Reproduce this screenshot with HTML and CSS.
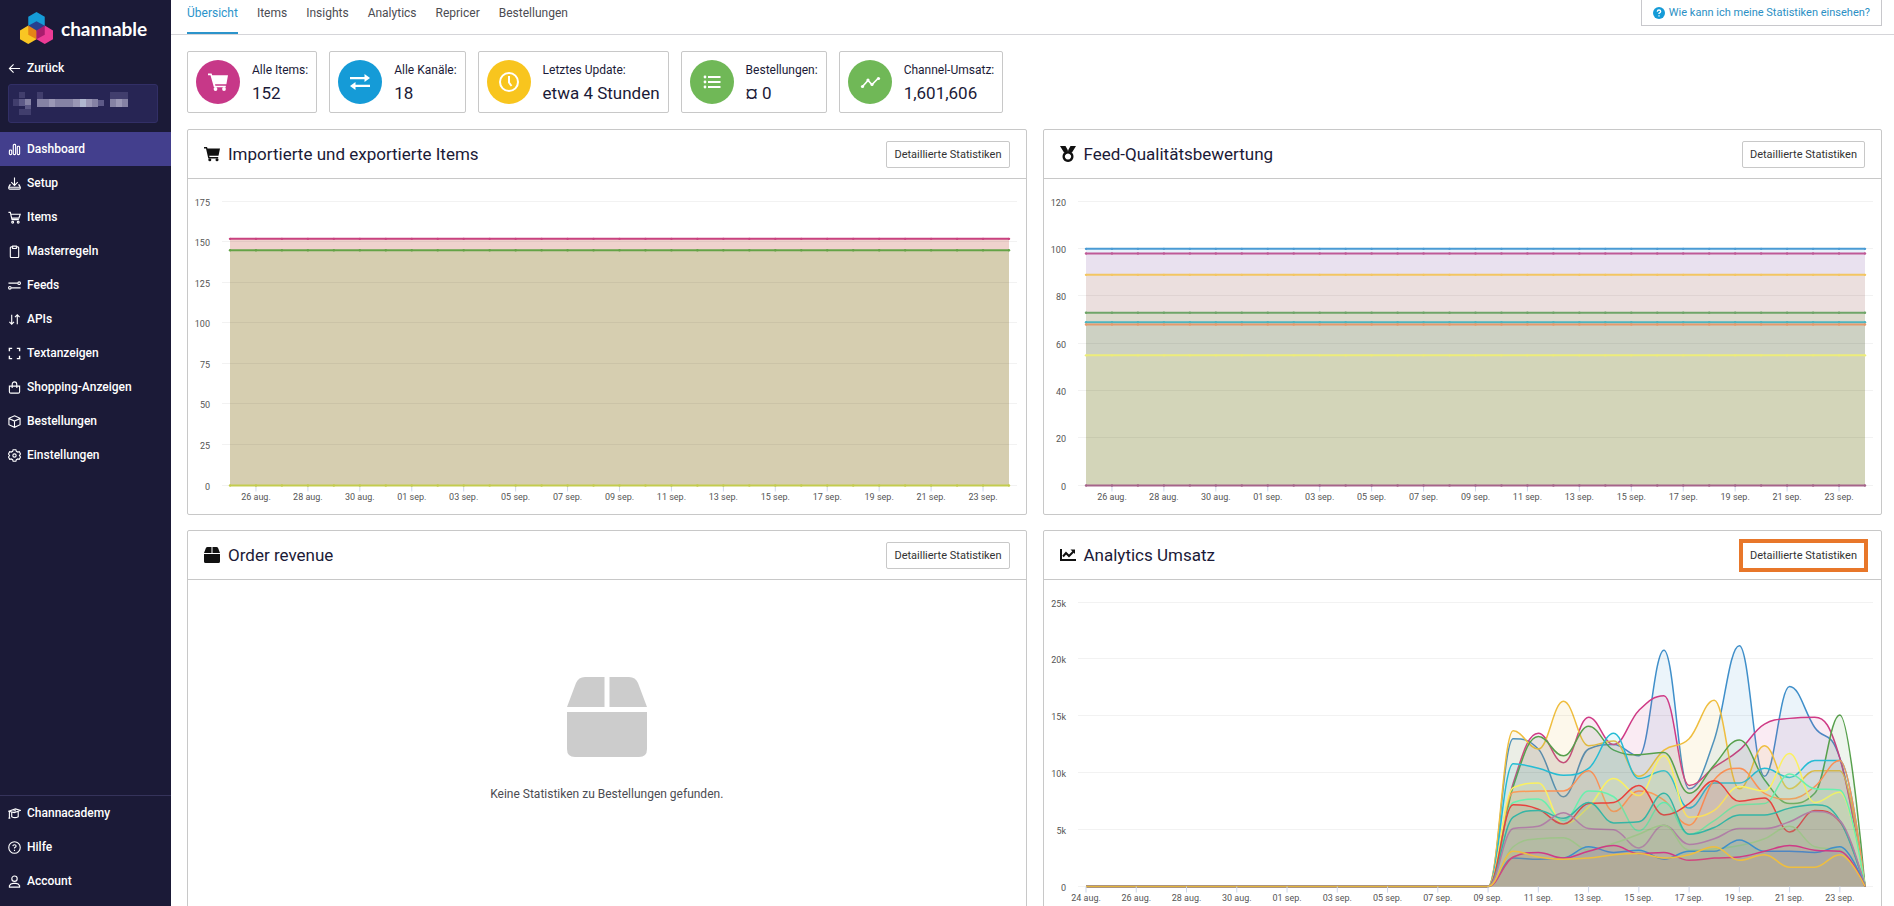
FILE: index.html
```html
<!DOCTYPE html>
<html lang="de">
<head>
  <meta charset="UTF-8">
  <title>Channable - Dashboard</title>
  <meta name="viewport" content="width=device-width, initial-scale=1.0">
  <link rel="stylesheet" href="styles.css">
</head>
<body>
  <aside class="sidebar">
    <a class="logo" href="#">
      <svg class="logo-mark" viewBox="0 0 34 34">
        <path fill="#159bd7" d="M17 0l8.500 5v10l-8.500 5-8.500-5V5z"/>
        <path fill="#f9c623" d="M8.500 14l8.500 5v9l-8.500 5L0 28v-9z"/>
        <path fill="#ec3b96" d="M25.500 14l8.500 5v9l-8.500 5-8.500-5v-9z"/>
        <path fill="#27408f" d="M17 9.500l8.500 4.700v.8L17 20l-8.500-5v-.8z"/>
        <path fill="#e58317" d="M8.500 14l8.500 5v9l-8.500-4.500z"/>
        <path fill="#a81c6d" d="M25.500 14L17 19v9l8.500-4.500z"/>
      </svg>
      <span>channable</span>
    </a>
    <a class="back" href="#">
      <svg class="icon" viewBox="0 0 14 14"><path d="M13 7H1.500M6 2.500L1.500 7 6 11.500"/></svg>
      Zurück
    </a>
    <div class="project">
      <svg class="project-name" viewBox="0 0 120 24">
        <g fill="#413e6d"><path d="M6 0h6v6H6zM0 7h6v7H0zM6 17h12v6H6zM24 0h6v7h-6zM97 0h18v7H97z"/></g>
        <g fill="#5d5a87"><path d="M6 7h6v7H6zM12 13h6v4h-6zM85 8h6v6h-6z"/></g>
        <g fill="#8582a4"><path d="M12 7h6v6h-6zM24 7h12v8H24zM42 7h18v8H42zM79 7h6v8h-6zM97 7h6v8h-6zM109 7h6v8h-6z"/></g>
        <g fill="#9a97b5"><path d="M36 7h6v8h-6zM60 7h7v8h-7zM73 7h6v8h-6zM103 7h6v8h-6z"/></g>
        <path fill="#b0b7cf" d="M67 7h6v8h-6z"/>
      </svg>
    </div>
    <nav class="menu">
      <a class="active" href="#">
        <svg class="icon" viewBox="0 0 14 14"><rect x="1.500" y="7.500" width="2.500" height="5" rx="1"/><rect x="5.700" y="1.500" width="2.500" height="11" rx="1"/><rect x="10" y="3.500" width="2.500" height="9" rx="1"/></svg>
        Dashboard
      </a>
      <a href="#">
        <svg class="icon" viewBox="0 0 14 14"><path d="M7 .5v8M3.500 5.500L7 9l3.500-3.500M3 8.500H2L.8 11v1q0 1 1 1h10.400q1 0 1-1v-1L12 8.500h-1M1 11h12"/></svg>
        Setup
      </a>
      <a href="#">
        <svg class="icon" viewBox="0 0 14 14"><path d="M.5 1.500h2l1.800 7.800h7.400M3 3.500h10.200l-1.500 4.200H4"/><circle cx="5" cy="12" r="1"/><circle cx="11" cy="12" r="1"/></svg>
        Items
      </a>
      <a href="#">
        <svg class="icon" viewBox="0 0 14 14"><path d="M5 2H3.500q-1 0-1 1v9.500q0 1 1 1h7q1 0 1-1V3q0-1-1-1H9"/><path d="M5 1.200h4v2.600H5z"/></svg>
        Masterregeln
      </a>
      <a href="#">
        <svg class="icon" viewBox="0 0 14 14"><path d="M.5 4.500h10M3.500 9.500h10"/><circle cx="12" cy="4.500" r="1.400"/><circle cx="2" cy="9.500" r="1.400"/></svg>
        Feeds
      </a>
      <a href="#">
        <svg class="icon" viewBox="0 0 14 14"><path d="M4 2v10M1.500 9.500L4 12l2.500-2.500M10 12V2M7.500 4.500L10 2l2.500 2.500"/></svg>
        APIs
      </a>
      <a href="#">
        <svg class="icon bold" viewBox="0 0 14 14"><path d="M1.500 4.500v-3h3M9.500 1.500h3v3M12.500 9.500v3h-3M4.500 12.500h-3v-3"/></svg>
        Textanzeigen
      </a>
      <a href="#">
        <svg class="icon" viewBox="0 0 14 14"><path d="M1.500 5.500h11v6q0 1.500-1.500 1.500H3q-1.500 0-1.500-1.500zM4.500 7.500V4q0-3 2.500-3t2.500 3v3.500"/></svg>
        Shopping-Anzeigen
      </a>
      <a href="#">
        <svg class="icon" viewBox="0 0 14 14"><path d="M7 .8l6 2.700v7L7 13.300 1 10.500v-7zM1 3.800L7 6.500l6-2.700M7 6.500v6.500"/></svg>
        Bestellungen
      </a>
      <a href="#">
        <svg class="icon" viewBox="0 0 14 14"><path d="M5.500.8h3l.5 1.700 1.500.8 1.700-.4 1.300 2.500L12.300 7l1.200 1.600-1.300 2.500-1.700-.4-1.500.8-.5 1.700h-3L5 11.500l-1.500-.8-1.700.4L.5 8.600 1.700 7 .5 5.400l1.300-2.500 1.700.4L5 2.500z"/><circle cx="7" cy="7" r="1.800"/></svg>
        Einstellungen
      </a>
    </nav>
    <nav class="menu menu-bottom">
      <a href="#">
        <svg class="icon" viewBox="0 0 14 14"><path d="M.7 4.500L8 2l5.500 1.700L6.800 6zM4 6v4.500q3.500 2 7 0V5M1.500 5v6.500M.5 12h2M6 4h2.500"/></svg>
        Channacademy
      </a>
      <a href="#">
        <svg class="icon" viewBox="0 0 14 14"><circle cx="7" cy="7" r="6.200"/><path d="M5.200 5.500Q5.300 4 7 4t1.800 1.500Q8.800 6.500 7 7.300v.9M7 9.500v1.200"/></svg>
        Hilfe
      </a>
      <a href="#">
        <svg class="icon" viewBox="0 0 14 14"><circle cx="7" cy="4" r="2.900"/><path d="M1.500 13v-1.500q1-2.500 4-2.500h3q3 0 4 2.500V13z"/></svg>
        Account
      </a>
    </nav>
  </aside>

  <main class="main">
    <header class="topbar">
      <nav class="tabs">
        <a class="active" href="#">Übersicht</a>
        <a href="#">Items</a>
        <a href="#">Insights</a>
        <a href="#">Analytics</a>
        <a href="#">Repricer</a>
        <a href="#">Bestellungen</a>
      </nav>
      <a class="help" href="#">
        <svg viewBox="0 0 12 12"><circle cx="6" cy="6" r="6" fill="#159bd7"/><path d="M4.300 4.700Q4.400 3 6 3t1.700 1.500Q7.700 5.500 6 6.300V7M6 8.200v1.200" fill="none" stroke="#fff" stroke-width="1.300"/></svg>
        Wie kann ich meine Statistiken einsehen?
      </a>
    </header>

    <div class="content">
      <section class="stats">
        <div class="stat">
          <span class="stat-icon pink">
            <svg viewBox="0 0 22 22" fill="#fff"><path d="M1 2.500h3.600l.6 1.700H21l-1.600 9H8l.4 1.500h10.400v1.600H6.900L3.500 4.200H1z"/><circle cx="8.500" cy="18" r="1.900"/><circle cx="17" cy="18" r="1.900"/></svg>
          </span>
          <div class="stat-text"><span>Alle Items:</span><strong>152</strong></div>
        </div>
        <div class="stat">
          <span class="stat-icon blue">
            <svg viewBox="0 0 22 22" fill="#fff"><path d="M1 6h14.500V3l5.500 4-5.500 4V8.200H1zM21 13.800H6.500V11L1 15l5.500 4v-3H21z"/></svg>
          </span>
          <div class="stat-text"><span>Alle Kanäle:</span><strong>18</strong></div>
        </div>
        <div class="stat">
          <span class="stat-icon yellow">
            <svg viewBox="0 0 22 22" fill="none" stroke="#fff" stroke-width="2"><circle cx="11" cy="11" r="9"/><path d="M11 5v6.500l2.500 3.500"/></svg>
          </span>
          <div class="stat-text"><span>Letztes Update:</span><strong>etwa 4 Stunden</strong></div>
        </div>
        <div class="stat">
          <span class="stat-icon green">
            <svg viewBox="0 0 22 22" fill="#fff"><path d="M7 5h12.500v2H7zM7 10h12.500v2H7zM7 15h12.500v2H7z"/><circle cx="4" cy="6" r="1.400"/><circle cx="4" cy="11" r="1.400"/><circle cx="4" cy="16" r="1.400"/></svg>
          </span>
          <div class="stat-text"><span>Bestellungen:</span><strong>¤ 0</strong></div>
        </div>
        <div class="stat">
          <span class="stat-icon green">
            <svg viewBox="0 0 22 22" fill="#fff"><path fill="none" stroke="#fff" stroke-width="1.600" d="M3.500 15.500l5.500-6 4 4 6.500-6.500"/><circle cx="3.500" cy="15.500" r="1.600"/><circle cx="9" cy="9" r="1.600"/><circle cx="13" cy="13.500" r="1.600"/><circle cx="19.500" cy="7.500" r="1.600"/></svg>
          </span>
          <div class="stat-text"><span>Channel-Umsatz:</span><strong>1,601,606</strong></div>
        </div>
      </section>

      <section class="panels">
        <article class="panel">
          <header class="panel-head">
            <svg viewBox="0 0 16 16"><path d="M0 1h3l.5 1.500H16l-1.500 7.300H5.200l.3 1.300h8.700v1.400H4.300L2 2.500H0z"/><circle cx="5.800" cy="13.700" r="1.500"/><circle cx="13" cy="13.700" r="1.500"/></svg>
            <h2>Importierte und exportierte Items</h2>
            <button type="button">Detaillierte Statistiken</button>
          </header>
          <div class="panel-body" id="chartItems"></div>
        </article>

        <article class="panel">
          <header class="panel-head">
            <svg viewBox="0 0 16 16"><path d="M0 0h5.500L8 4.500 6.500 6 4 6.500zM16 0h-5.500L8 4.500 9.500 6l2.500.5z"/><path fill-rule="evenodd" d="M8 5a5.500 5.500 0 1 0 .01 0zM8 7.400a3.100 3.100 0 1 1-.01 0z"/></svg>
            <h2>Feed-Qualitätsbewertung</h2>
            <button type="button">Detaillierte Statistiken</button>
          </header>
          <div class="panel-body" id="chartQuality"></div>
        </article>

        <article class="panel">
          <header class="panel-head">
            <svg viewBox="0 0 80 80"><path d="M18 0h19.500v30H0L9 6q2.500-6 9-6zM42.500 0H62q6.500 0 9 6l9 24H42.500zM0 35h80v37q0 8-8 8H8q-8 0-8-8z"/></svg>
            <h2>Order revenue</h2>
            <button type="button">Detaillierte Statistiken</button>
          </header>
          <div class="panel-body empty">
            <svg viewBox="0 0 80 80"><path d="M18 0h19.500v30H0L9 6q2.500-6 9-6zM42.500 0H62q6.500 0 9 6l9 24H42.500zM0 35h80v37q0 8-8 8H8q-8 0-8-8z"/></svg>
            <p>Keine Statistiken zu Bestellungen gefunden.</p>
          </div>
        </article>

        <article class="panel">
          <header class="panel-head">
            <svg viewBox="0 0 16 16"><path d="M0 2h2v10h14v2H0z"/><path fill="none" stroke="#111" stroke-width="2" d="M3 9.500l3-3.500 3 3 4.500-4.500"/><path d="M10.500 2.500H15V7z"/></svg>
            <h2>Analytics Umsatz</h2>
            <button type="button" class="highlight">Detaillierte Statistiken</button>
          </header>
          <div class="panel-body" id="chartRevenue"></div>
        </article>
      </section>
    </div>
  </main>

  <script src="charts.js"></script>
</body>
</html>
```
FILE: styles.css
```css
* {
  box-sizing: border-box;
}
body {
  margin: 0;
  display: flex;
  height: 100vh;
  overflow: hidden;
  font-family: Roboto, "Liberation Sans", sans-serif;
  font-size: 12px;
  color: #1b1a37;
  background: #fff;
}
a {
  color: inherit;
  text-decoration: none;
}

/* Sidebar */
.sidebar {
  flex: none;
  width: 171px;
  display: flex;
  flex-direction: column;
  padding-bottom: 8px;
  background: #1b1a37;
  color: #fff;
  font-weight: 500;
}
.logo {
  display: flex;
  align-items: center;
  gap: 8px;
  height: 56px;
  padding-left: 20px;
  font-family: Lato, sans-serif;
  font-size: 19px;
  font-weight: 700;
}
.logo-mark {
  width: 33px;
  height: 33px;
}
.back {
  display: flex;
  align-items: center;
  gap: 6px;
  height: 24px;
  padding-left: 8px;
}
.icon {
  flex: none;
  width: 13px;
  height: 13px;
  fill: none;
  stroke: #fff;
  stroke-width: 1.2;
}
.icon.bold {
  stroke-width: 1.5;
}
.project {
  height: 39px;
  margin: 4px 13px 9px 8px;
  padding: 7px 4px;
  background: #272554;
  border: 1px solid #322f66;
  border-radius: 3px;
}
.project-name {
  display: block;
  width: 120px;
  height: 24px;
}
.menu a {
  display: flex;
  align-items: center;
  gap: 6px;
  height: 34px;
  padding-left: 8px;
}
.menu .active {
  background: #433f8d;
}
.menu-bottom {
  margin-top: auto;
  border-top: 1px solid #35335a;
}

/* Tabs */
.main {
  flex: 1;
  min-width: 0;
}
.topbar {
  display: flex;
  justify-content: space-between;
  align-items: flex-start;
  height: 35px;
  padding: 0 12px 0 16px;
  border-bottom: 1px solid #d5d5d9;
}
.tabs {
  display: flex;
  gap: 19px;
  color: #4c4c52;
}
.tabs a {
  height: 34px;
  padding-top: 4px;
  line-height: 18px;
}
.tabs .active {
  color: #2b94cb;
  border-bottom: 2px solid #2b94cb;
}
.help {
  display: flex;
  align-items: center;
  gap: 4px;
  height: 26px;
  padding: 0 11px;
  font-size: 11px;
  color: #2b8fc4;
  border: 1px solid #c8c8cc;
  border-top: 0;
}
.help svg {
  width: 12px;
  height: 12px;
}

/* Stat cards */
.content {
  padding: 16px 12px 16px 16px;
}
.stats {
  display: flex;
  gap: 12px;
  margin-bottom: 16px;
}
.stat {
  display: flex;
  align-items: center;
  gap: 12px;
  height: 62px;
  padding: 0 8px;
  border: 1px solid #c8c8c8;
  border-radius: 2px;
}
.stat-icon {
  display: flex;
  align-items: center;
  justify-content: center;
  width: 44px;
  height: 44px;
  border-radius: 50%;
}
.stat-icon svg {
  width: 22px;
  height: 22px;
}
.pink { background: #c73888; }
.blue { background: #159bd7; }
.yellow { background: #f8c51e; }
.green { background: #70b857; }
.stat-text {
  display: flex;
  flex-direction: column;
  gap: 4px;
  line-height: 18px;
}
.stat-text strong {
  font-size: 17px;
  font-weight: 400;
  line-height: 20px;
}

/* Panels */
.panels {
  display: grid;
  grid-template-columns: 1fr 1fr;
  gap: 15px 16px;
}
.panel {
  min-width: 0;
  border: 1px solid #c8c8c8;
  border-radius: 2px;
}
.panel-head {
  display: flex;
  align-items: center;
  gap: 8px;
  height: 49px;
  padding: 0 16px;
  border-bottom: 1px solid #c8c8c8;
}
.panel-head svg {
  width: 16px;
  height: 16px;
  fill: #111;
}
.panel-head h2 {
  flex: 1;
  margin: 0;
  font-size: 17px;
  font-weight: 400;
}
.panel-head button {
  height: 27px;
  padding: 0 7px;
  font-family: inherit;
  font-size: 11px;
  color: #333;
  background: #fff;
  border: 1px solid #c8c8c8;
  border-radius: 2px;
  cursor: pointer;
}
.panel-head .highlight {
  border-color: #e8772a;
  border-radius: 0;
  outline: 4px solid #e8772a;
  outline-offset: -1px;
}
.panel-body {
  height: 335px;
}
.panel-body svg {
  display: block;
}
.empty {
  display: flex;
  flex-direction: column;
  align-items: center;
  padding-top: 97px;
}
.empty svg {
  width: 80px;
  height: 80px;
  fill: #ccc;
}
.empty p {
  margin: 28px 0 0;
  line-height: 18px;
  color: #4c4c52;
}

/* Charts */
.axis-label {
  font-size: 9px;
  fill: #555;
}
.grid-line {
  stroke: #000;
  stroke-opacity: 0.05;
}
.tick {
  stroke: #ccd6eb;
}
```
FILE: charts.js
```js
const PLOT = { left: 34, right: 9, top: 22.5, height: 284, inset: 8 };

function makeDays(start, count) {
  const days = [];
  const date = new Date(2021, 7, start);
  for (let i = 0; i < count; i++) {
    const day = String(date.getDate()).padStart(2, '0');
    days.push(day + (date.getMonth() === 7 ? ' aug.' : ' sep.'));
    date.setDate(date.getDate() + 1);
  }
  return days;
}

function flat(value, color, fill) {
  return { values: new Array(31).fill(value), color, fill, opacity: 1, width: 2, dots: true };
}

// values are in thousands, 10 sep. up to 23 sep.
function revenue(color, values) {
  const all = new Array(17).fill(0).concat(values, [0]);
  return { values: all, color, fill: color, opacity: 0.1, width: 1.5 };
}

function splinePath(pts) {
  let path = `M${pts[0].x} ${pts[0].y}`;
  let right = pts[0];
  for (let i = 1; i < pts.length; i++) {
    const p = pts[i];
    const last = pts[i - 1];
    const next = pts[i + 1];
    let left = p;
    let nextRight = p;
    if (next) {
      const lx = (1.5 * p.x + last.x) / 2.5;
      let ly = (1.5 * p.y + last.y) / 2.5;
      const rx = (1.5 * p.x + next.x) / 2.5;
      let ry = (1.5 * p.y + next.y) / 2.5;
      const shift = ((ry - ly) * (rx - p.x)) / (rx - lx) + p.y - ry;
      ly += shift;
      ry += shift;
      // keep the curve from overshooting its neighbours
      if (ly > last.y && ly > p.y) { ly = Math.max(last.y, p.y); ry = 2 * p.y - ly; }
      else if (ly < last.y && ly < p.y) { ly = Math.min(last.y, p.y); ry = 2 * p.y - ly; }
      if (ry > next.y && ry > p.y) { ry = Math.max(next.y, p.y); ly = 2 * p.y - ry; }
      else if (ry < next.y && ry < p.y) { ry = Math.min(next.y, p.y); ly = 2 * p.y - ry; }
      left = { x: lx, y: ly };
      nextRight = { x: rx, y: ry };
    }
    path += `C${right.x} ${right.y} ${left.x} ${left.y} ${p.x} ${p.y}`;
    right = nextRight;
  }
  return path;
}

function drawChart(id, opts) {
  const box = document.getElementById(id);
  const width = box.clientWidth;
  const bottom = PLOT.top + PLOT.height;
  const plotRight = width - PLOT.right;
  const x0 = PLOT.left + PLOT.inset;
  const step = (plotRight - PLOT.inset - x0) / (opts.days.length - 1);
  const toX = i => x0 + i * step;
  const toY = v => bottom - (v / opts.max) * PLOT.height;
  let areas = '', lines = '', grid = '', labels = '';

  opts.series.forEach(s => {
    const pts = s.values.map((v, i) => ({ x: toX(i), y: toY(v) }));
    const path = splinePath(pts);
    const area = `<path d="${path}L${toX(pts.length - 1)} ${bottom}L${x0} ${bottom}Z" fill="${s.fill}" fill-opacity="${s.opacity}"/>`;
    const line = `<path d="${path}" fill="none" stroke="${s.color}" stroke-width="${s.width}"/>`;
    if (s.dots) {
      areas += area;
      lines += line + pts.map(p => `<circle cx="${p.x}" cy="${p.y}" r="1.2" fill="${s.color}"/>`).join('');
    } else {
      areas += area + line;
    }
  });

  for (let v = 0; v <= opts.max; v += opts.tick) {
    const y = Math.round(toY(v)) - 0.5;
    grid += `<line class="grid-line" x1="${PLOT.left}" x2="${plotRight}" y1="${y}" y2="${y}"/>`;
    labels += `<text class="axis-label" x="22" y="${y + 4}" text-anchor="end">${v}${v ? opts.unit || '' : ''}</text>`;
  }
  for (let i = opts.firstLabel; i < opts.days.length; i += 2) {
    grid += `<line class="tick" x1="${toX(i)}" x2="${toX(i)}" y1="${bottom}" y2="${bottom + 6}"/>`;
    labels += `<text class="axis-label" x="${toX(i)}" y="${bottom + 14}" text-anchor="middle">${opts.days[i]}</text>`;
  }

  box.innerHTML = `<svg width="${width}" height="335">${areas}${grid}${lines}${labels}</svg>`;
}

const items = {
  days: makeDays(25, 31), firstLabel: 1, max: 175, tick: 25,
  series: [
    flat(152, '#c9427f', '#efd2cd'),
    flat(145, '#64a346', '#d6ceb0'),
    flat(0, '#c3cc4e', 'none')
  ]
};

const quality = {
  days: makeDays(25, 31), firstLabel: 1, max: 120, tick: 20,
  series: [
    flat(100, '#4a9bd4', '#e8f1fa'),
    flat(98, '#bf5a97', '#e9e1ef'),
    flat(89, '#f3c662', '#ebdfde'),
    flat(73, '#6fa568', '#dcdacc'),
    flat(69, '#4db4bf', '#d3d8d0'),
    flat(68, '#e59a6c', '#cdd1c3'),
    flat(55, '#ecec7a', '#d3d5b9'),
    flat(0, '#a5648a', 'none')
  ]
};

const sales = {
  days: makeDays(24, 32), firstLabel: 0, max: 25, tick: 5, unit: 'k',
  series: [
    revenue('#3f8fca', [13, 12.1, 7.9, 12.1, 12.5, 11.5, 20.8, 8.6, 12.9, 21.2, 9.7, 17.6, 14, 11.3]),
    revenue('#cf3a86', [9.1, 13.5, 10.9, 14.9, 12.5, 15.5, 16.8, 8.9, 10.5, 12, 14.3, 14.8, 14.9, 11.3]),
    revenue('#efbe3f', [13.7, 12.1, 16.3, 12.4, 12.8, 9.7, 12, 13, 16.4, 8.6, 12.4, 8.6, 10.2, 10.2]),
    revenue('#57a04c', [8.8, 13.2, 11.5, 14.1, 12, 11.6, 11.8, 8.2, 10.7, 12.9, 9.4, 7.3, 8.2, 15.1]),
    revenue('#25bcd4', [10.8, 10.4, 9.8, 10.4, 13.5, 9.5, 10.2, 6.9, 9.1, 9.1, 10.4, 9.6, 11.1, 11.1]),
    revenue('#fb9156', [8.3, 8.4, 8.4, 10.2, 6.6, 8.4, 7.6, 5.4, 9.4, 10.4, 8.2, 7.7, 8.8, 11.1]),
    revenue('#fbf160', [8.7, 9.1, 5.5, 7, 9.5, 8, 11.5, 6.1, 6.7, 8.8, 8.4, 11.7, 7.4, 8.3]),
    revenue('#69f0ae', [7.4, 7.7, 5.8, 8.4, 7.9, 4.9, 7.4, 4.6, 5.8, 7.2, 7.3, 9.9, 8.6, 8.5]),
    revenue('#e8413d', [7.2, 6.8, 5.5, 7.3, 7.4, 8.9, 6.3, 7.3, 9.3, 7.5, 7.8, 4.8, 6.7, 5.7]),
    revenue('#35b5a5', [6.1, 6.7, 6, 7.4, 5.6, 5.7, 8.2, 4.6, 5.2, 6.3, 6.3, 6.9, 7.2, 5.8]),
    revenue('#b07fa6', [5.1, 5.3, 6.5, 5.1, 5, 3.4, 5.4, 3.7, 4.2, 5.1, 5.1, 5.7, 6.6, 5.8]),
    revenue('#9fc48a', [3.5, 4.2, 4.3, 3.2, 3.8, 4.6, 5.4, 3.2, 3.3, 3.6, 4.2, 5.3, 3.5, 3.2]),
    revenue('#3f8fca', [2.5, 2.4, 2.5, 3.5, 3, 3.2, 2.4, 3.1, 3.1, 4.1, 3.1, 3.1, 3, 3.5]),
    revenue('#cf3a86', [2.6, 3, 2.5, 3.1, 3.6, 2.9, 3, 2.3, 2.5, 2.6, 3.1, 3.6, 3.2, 3.1]),
    revenue('#efbe3f', [3.1, 2.6, 2.4, 2.5, 2.8, 2.9, 2.5, 2.8, 3.5, 2.3, 2.8, 1.7, 1.7, 2.8])
  ]
};

function drawAll() {
  drawChart('chartItems', items);
  drawChart('chartQuality', quality);
  drawChart('chartRevenue', sales);
}

drawAll();
window.addEventListener('resize', drawAll);
```
